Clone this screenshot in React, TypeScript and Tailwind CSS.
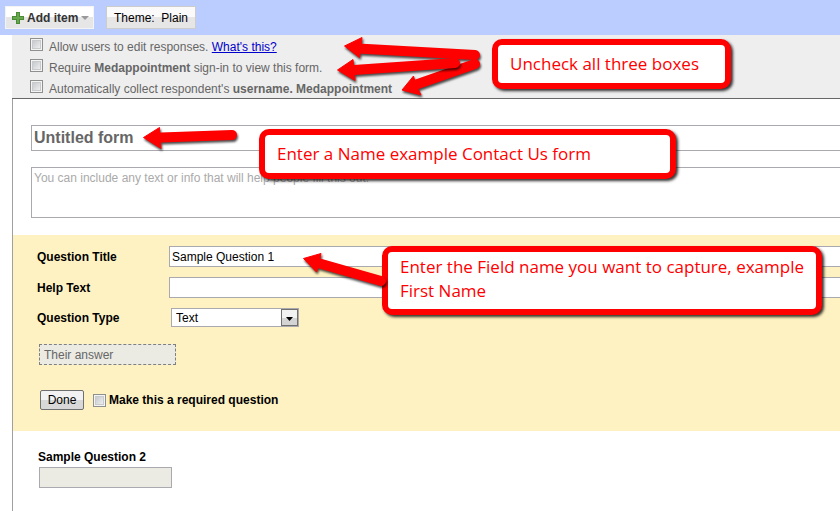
import type { ReactNode } from "react";

const checkboxClass =
  "size-[13px] shrink-0 appearance-none border border-[#8e8f8f] bg-linear-to-br from-[#bcc0c5] to-[#f8f8f8] shadow-[inset_0_0_0_1px_#f4f4f4,inset_0_0_0_2px_#c8cacc] checked:bg-[#4a6ea8]";

const fieldClass =
  "block w-full border border-r-0 border-[#a9a9af] bg-white px-0.5 outline-none";

function Toolbar() {
  return (
    <header className="flex h-[35px] items-center gap-3 bg-[#bbccff] px-[5px]">
      <button className="flex h-[23px] w-[89px] items-center gap-[3px] border border-[#f4f4f4] bg-linear-to-b from-white from-50% to-[#e6e6e6] to-50% pl-1.5 font-bold text-[#333]">
        <svg viewBox="0 0 12 12" className="size-3 shrink-0" aria-hidden="true">
          <path d="M4 0h4v4h4v4H8v4H4V8H0V4h4z" fill="#4b8b35" />
          <path d="M5 1h2v4h4v2H7v4H5V7H1V5h4z" fill="#67a84e" />
        </svg>
        <span className="whitespace-nowrap">Add item</span>
        <svg viewBox="0 0 8 4" className="h-1 w-2 shrink-0" aria-hidden="true">
          <path d="M0 0h8L4 4z" fill="#999" />
        </svg>
      </button>
      <button className="h-[23px] w-[90px] border border-[#ccc] bg-linear-to-b from-[#fafafa] from-50% to-[#e6e6e6] to-50% whitespace-pre">
        {"Theme:  Plain"}
      </button>
    </header>
  );
}

function Setting({ id, children }: { id: string; children: ReactNode }) {
  return (
    <div className="flex h-[21px] items-start gap-1.5">
      <input id={id} type="checkbox" className={checkboxClass} />
      <label htmlFor={id} className="pt-px whitespace-nowrap">
        {children}
      </label>
    </div>
  );
}

function Callout({ className, children }: { className: string; children: ReactNode }) {
  return (
    <p
      className={`absolute rounded-[10px] border-6 border-[#ff0000] bg-white pl-3 font-['Open_Sans','Noto_Sans',sans-serif] text-[17px] leading-6 whitespace-nowrap text-[#ff0000] shadow-[2px_2px_3px_0px_rgba(0,0,0,0.8)] ${className}`}
    >
      {children}
    </p>
  );
}

function Arrow({ head, shaft }: { head: string; shaft: string }) {
  return (
    <g className="[filter:drop-shadow(1px_2px_1px_rgba(0,0,0,0.7))]">
      <path d={shaft} stroke="#f00" strokeWidth="10" strokeLinecap="round" />
      <path d={head} fill="#f00" stroke="#f00" strokeLinejoin="round" />
    </g>
  );
}

export default function App() {
  return (
    <div className="relative min-h-screen overflow-hidden bg-white font-['Liberation_Sans',Arial,sans-serif] text-[12px] leading-4 text-black">
      <Toolbar />
      <main className="ml-3">
        <section className="h-16 border-b border-[#666] bg-[#eee] pt-[3px] pl-[18px] text-[#666]">
          <Setting id="edit">
            Allow users to edit responses.{" "}
            <a href="#help" className="text-[#0000cc] underline">
              What's this?
            </a>
          </Setting>
          <Setting id="signin">
            Require <b>Medappointment</b> sign-in to view this form.
          </Setting>
          <Setting id="collect">
            Automatically collect respondent's <b>username. Medappointment</b>
          </Setting>
        </section>

        <div className="min-h-[413px] border-l border-[#a0a0a0]">
          <section className="flex h-[136px] flex-col gap-4 pt-[26px] pl-[18px]">
            <input
              aria-label="Form title"
              defaultValue="Untitled form"
              className={`${fieldClass} h-[26px] text-[16px] font-bold text-[#666]`}
            />
            <textarea
              aria-label="Form description"
              placeholder="You can include any text or info that will help people fill this out."
              className={`${fieldClass} h-[51px] resize-none pt-0.5 placeholder:text-[#aaa]`}
            />
          </section>

          <section className="h-[196px] bg-[#fff2c2] pt-[11px] pl-6">
            <div className="grid grid-cols-[132px_1fr] items-center gap-y-[10px]">
              <label htmlFor="title" className="font-bold">
                Question Title
              </label>
              <input id="title" defaultValue="Sample Question 1" className={`${fieldClass} h-[21px]`} />
              <label htmlFor="help" className="font-bold">
                Help Text
              </label>
              <input id="help" className={`${fieldClass} h-[21px]`} />
              <label htmlFor="type" className="font-bold">
                Question Type
              </label>
              <div className="relative ml-0.5 h-[19px] w-32">
                <select
                  id="type"
                  className="block h-full w-full appearance-none border border-[#a9a9af] bg-white pl-1 outline-none"
                >
                  <option>Text</option>
                  <option>Paragraph text</option>
                  <option>Multiple choice</option>
                </select>
                <span className="pointer-events-none absolute inset-y-px right-px flex w-[17px] items-center justify-center border border-[#707070] bg-linear-to-b from-[#f2f2f2] from-50% to-[#d4d4d4] to-50%">
                  <svg viewBox="0 0 7 4" className="mt-0.5 h-1 w-[7px]" aria-hidden="true">
                    <path d="M0 0h7L3.5 4z" fill="#000" />
                  </svg>
                </span>
              </div>
            </div>
            <input
              aria-label="Their answer"
              defaultValue="Their answer"
              readOnly
              className="mt-[17px] ml-0.5 block h-[21px] w-[137px] border border-dashed border-[#808080] bg-[#ebebe4] px-1 text-[#666] outline-none"
            />
            <div className="mt-[25px] ml-[3px] flex items-center">
              <button className="h-5 w-11 rounded-xs border border-[#707070] bg-linear-to-b from-[#f2f2f2] from-50% to-[#d8d8d8] to-50%">
                Done
              </button>
              <input id="required" type="checkbox" className={`${checkboxClass} ml-[9px]`} />
              <label htmlFor="required" className="ml-[3px] font-bold">
                Make this a required question
              </label>
            </div>
          </section>

          <section className="pt-[18px] pl-[25px]">
            <label htmlFor="second" className="block font-bold">
              Sample Question 2
            </label>
            <input
              id="second"
              readOnly
              className="mt-0.5 ml-px block h-[21px] w-[133px] border border-[#a9a9af] bg-[#ebebe4] outline-none"
            />
          </section>
        </div>
      </main>

      <Callout className="top-[39px] left-[492px] h-[50px] w-[239px] pt-[7px]">
        Uncheck all three boxes
      </Callout>
      <Callout className="top-[129px] left-[259px] h-[50px] w-[417px] pt-[7px]">
        Enter a Name example Contact Us form
      </Callout>
      <Callout className="top-[246px] left-[382px] h-[69px] w-[440px] pt-[3px]">
        Enter the Field name you want to capture, example
        <br />
        First Name
      </Callout>

      <svg
        viewBox="0 0 840 511"
        fill="none"
        className="pointer-events-none absolute top-0 left-0 h-[511px] w-[840px]"
        aria-hidden="true"
      >
        <Arrow shaft="M358 48.5L475 55" head="M344.5 46L362 37.5L361 47L359.5 57.5Z" />
        <Arrow shaft="M412 86L475 64" head="M402 90L413.5 76L416 85L421 95Z" />
        <Arrow shaft="M354 70L455 63" head="M337.5 70L353 59.5L354 70L355 80.5Z" />
        <Arrow shaft="M161 137.5L232 135" head="M143.5 137.5L159.5 127.5L160 138L161 148.5Z" />
        <Arrow shaft="M318 263L381 281" head="M303.5 258.5L321 253.5L319 263L316.5 272Z" />
      </svg>
    </div>
  );
}
